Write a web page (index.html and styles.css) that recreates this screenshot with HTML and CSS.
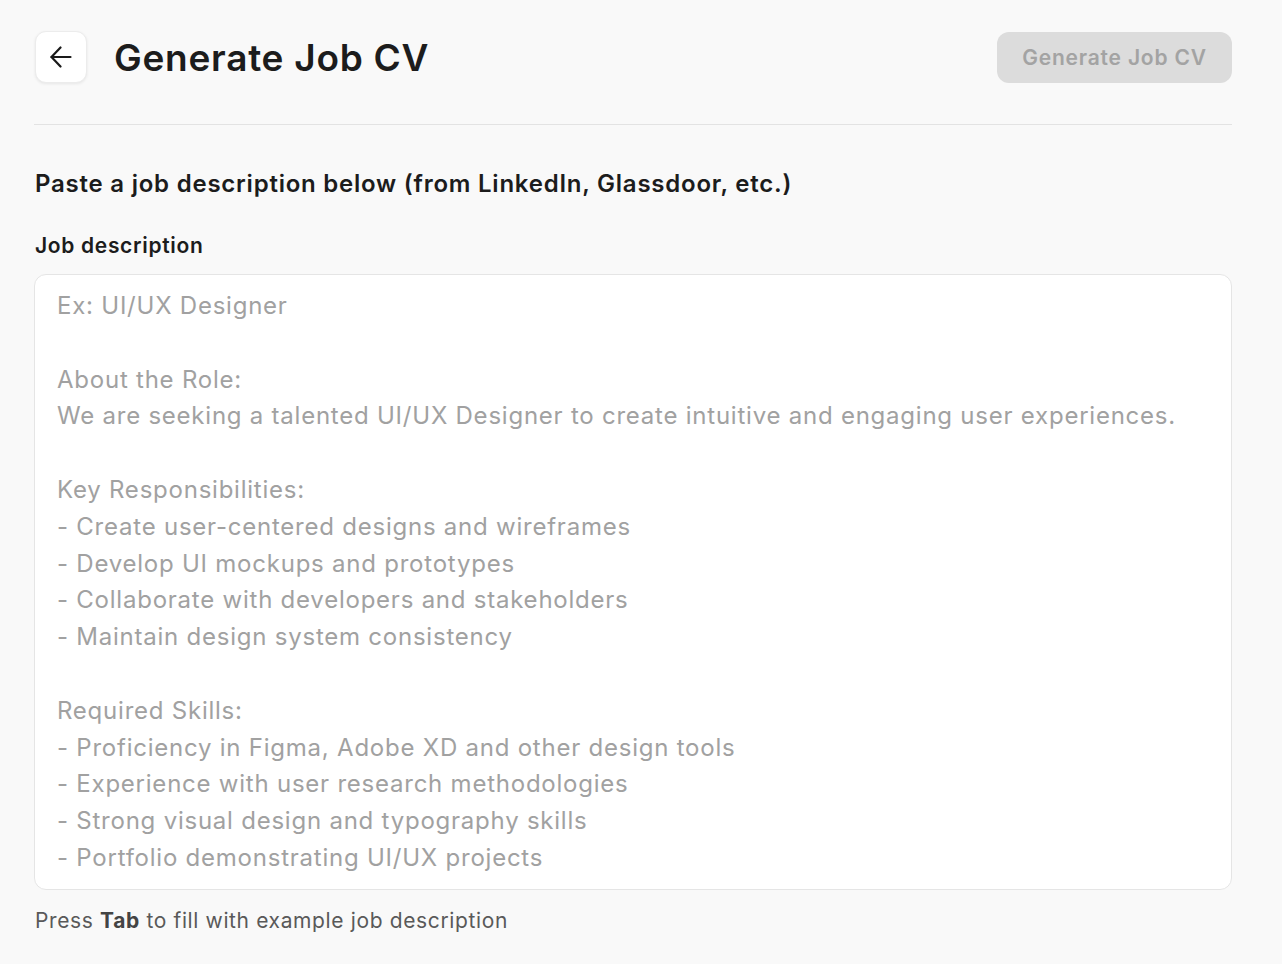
FILE: index.html
```html
<!DOCTYPE html>
<html lang="en">
<head>
<meta charset="utf-8">
<title>Generate Job CV</title>
<link rel="stylesheet" href="styles.css">
</head>
<body>
<div class="page">
  <header class="topbar">
    <div class="title-group">
      <button class="back-btn" aria-label="Back">
        <svg width="22" height="22" viewBox="0 0 22 22" fill="none" stroke="#1a1a1a" stroke-width="2.2" stroke-linecap="round" stroke-linejoin="round">
          <path d="M20.5 11H1.5"/>
          <path d="M10.5 1.5L1.5 11l9 9.5"/>
        </svg>
      </button>
      <h1 class="title">Generate Job CV</h1>
    </div>
    <button class="generate-btn" disabled>Generate Job CV</button>
  </header>
  <hr class="divider">
  <h2 class="intro">Paste a job description below (from LinkedIn, Glassdoor, etc.)</h2>
  <label class="field-label" for="jd">Job description</label>
  <textarea id="jd" class="jd-input" placeholder="Ex: UI/UX Designer

About the Role:
We are seeking a talented UI/UX Designer to create intuitive and engaging user experiences.

Key Responsibilities:
- Create user-centered designs and wireframes
- Develop UI mockups and prototypes
- Collaborate with developers and stakeholders
- Maintain design system consistency

Required Skills:
- Proficiency in Figma, Adobe XD and other design tools
- Experience with user research methodologies
- Strong visual design and typography skills
- Portfolio demonstrating UI/UX projects"></textarea>
  <p class="hint">Press <strong>Tab</strong> to fill with example job description</p>
</div>
</body>
</html>
```
FILE: styles.css
```css
* { box-sizing: border-box; }
html, body { margin: 0; padding: 0; }
body {
  background: #f9f9f9;
  font-family: Inter, "Noto Sans", sans-serif;
  color: #1c1c1c;
  letter-spacing: 0.032em;
}
.page {
  padding: 31px 50px 0 35px;
  display: flex;
  flex-direction: column;
}
.topbar {
  display: flex;
  align-items: center;
  justify-content: space-between;
}
.title-group {
  display: flex;
  align-items: center;
  gap: 27px;
}
.back-btn {
  width: 52px;
  height: 52px;
  border-radius: 11px;
  background: #fff;
  border: 1px solid #ececec;
  box-shadow: 0 1px 3px rgba(0,0,0,0.08);
  display: flex;
  align-items: center;
  justify-content: center;
  padding: 0;
}
.title {
  margin: 0;
  font-size: 37px;
  font-weight: 600;
  letter-spacing: 0.02em;
  color: #1c1c1c;
}
.generate-btn {
  width: 235px;
  height: 51px;
  border: none;
  border-radius: 12px;
  background: #dcdcdc;
  color: #a3a3a3;
  font-family: Inter, "Noto Sans", sans-serif;
  font-size: 21px;
  font-weight: 600;
  letter-spacing: 0.038em;
  margin-top: 1px;
}
.divider {
  border: none;
  border-top: 1px solid #e3e3e3;
  margin: 41px 0 0 -1px;
  width: calc(100% + 1px);
}
.intro {
  margin: 44px 0 0 0;
  font-size: 24px;
  font-weight: 600;
  line-height: 30px;
  letter-spacing: 0.032em;
  color: #1c1c1c;
}
.field-label {
  margin-top: 34px;
  font-size: 21px;
  font-weight: 600;
  line-height: 26px;
  letter-spacing: 0.032em;
  color: #1c1c1c;
}
.jd-input {
  margin: 15px 0 0 -1px;
  height: 616px;
  width: calc(100% + 1px);
  background: #fff;
  border: 1px solid #e5e5e5;
  border-radius: 12px;
  padding: 13px 22px;
  font-family: Inter, "Noto Sans", sans-serif;
  font-size: 24px;
  line-height: 36.8px;
  letter-spacing: 0.032em;
  color: #1c1c1c;
  resize: none;
  outline: none;
  overflow: hidden;
}
.jd-input::placeholder { color: #a1a1a1; }
.hint {
  margin: 17px 0 0 0;
  font-size: 21px;
  line-height: 28px;
  letter-spacing: 0.03em;
  color: #595959;
}
.hint strong { color: #444; font-weight: 700; }
```
